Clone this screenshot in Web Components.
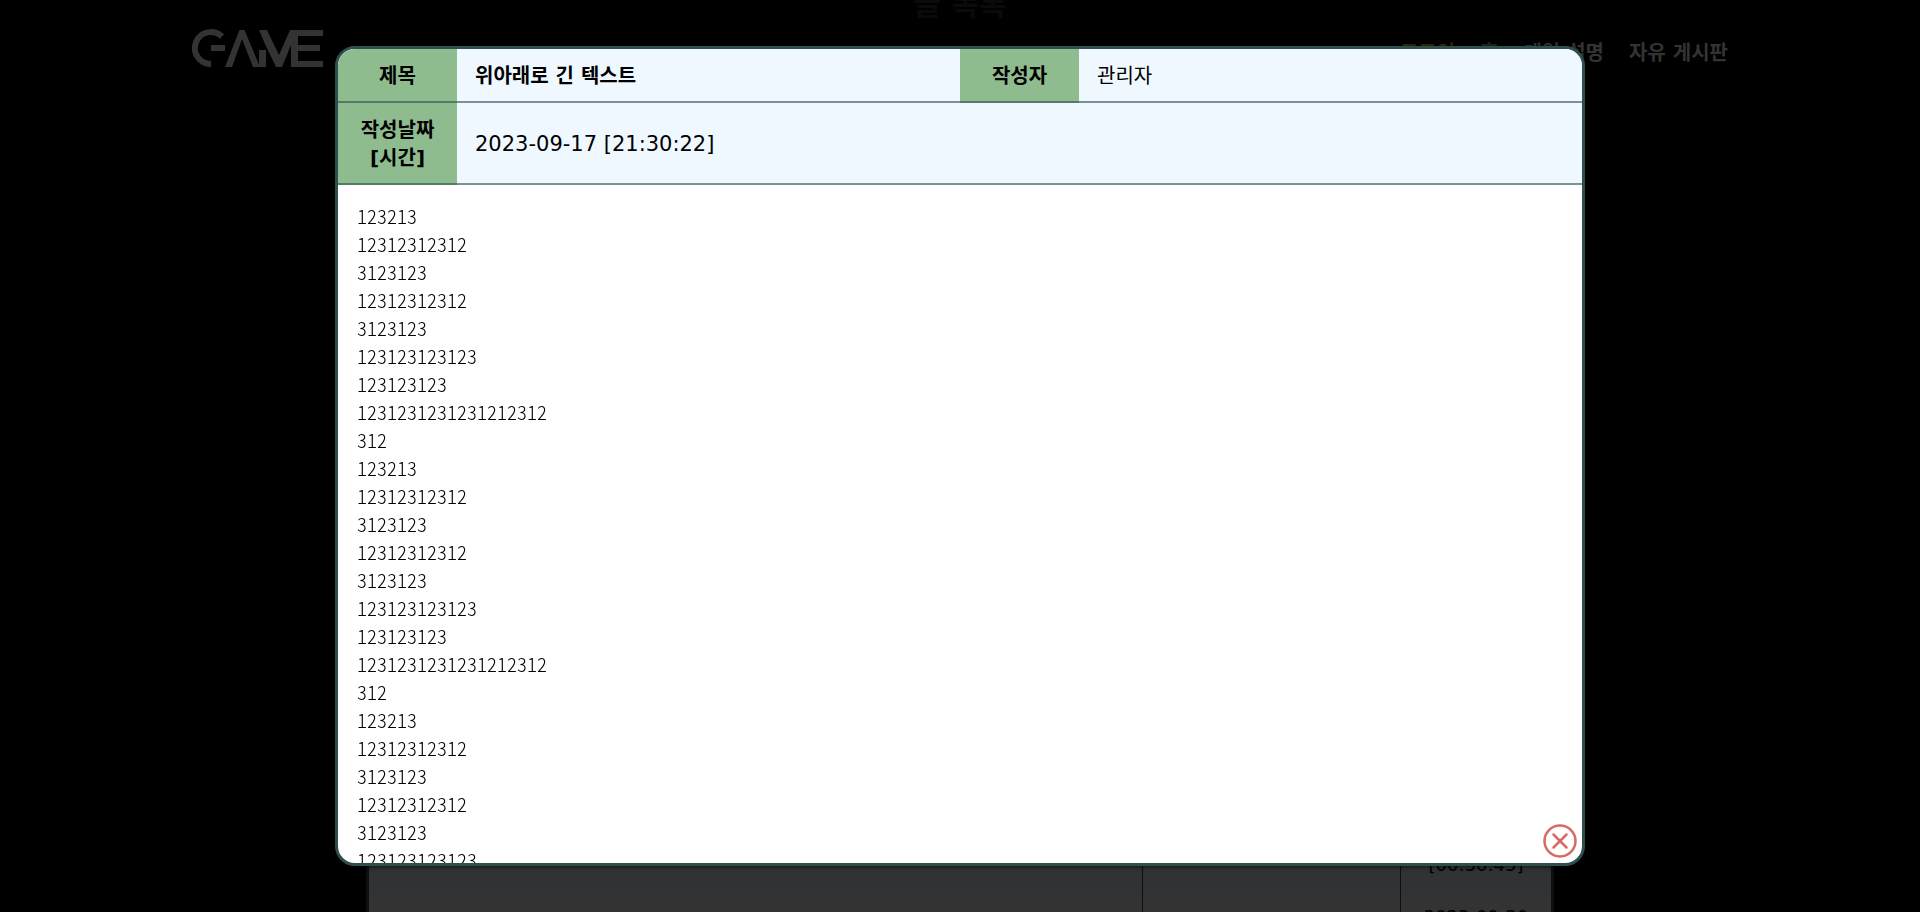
<!DOCTYPE html>
<html lang="ko">
<head>
<meta charset="utf-8">
<title>자유 게시판</title>
<style>
  html, body { margin: 0; height: 100%; background: #000; }
  body {
    overflow: hidden;
    font-family: "DejaVu Sans", "Noto Sans CJK KR", sans-serif;
    font-size: 20px;
    line-height: 28px;
    color: #000;
  }
</style>
</head>
<body>
<board-page></board-page>

<script>
const define = (name, html) => {
  const template = document.createElement('template');
  template.innerHTML = html;
  customElements.define(name, class extends HTMLElement {
    constructor() {
      super();
      this.attachShadow({ mode: 'open' }).append(template.content.cloneNode(true));
    }
  });
};

define('game-logo', `
  <style>
    :host { display: block; width: 132px; height: 38px; }
    svg { display: block; width: 100%; height: 100%; overflow: visible; }
  </style>
  <svg viewBox="1 0 132 38" role="img" aria-label="GAME">
    <path d="M31 7.500A16 16 0 1 0 20 35" fill="none" stroke="#333" stroke-width="6"/>
    <path d="M20 16h14v6H20z" fill="#333"/>
    <path d="M34 38 48.500 1h5L69 38h-7L51 10 41 38z" fill="#333"/>
    <path d="M68 1h8l12 25L99 1h8v37h-7V16L91 38h-6L74 15z" fill="#333"/>
    <path d="M68 21h7v17h-7z" fill="#333"/>
    <path d="M106 1h26v6h-26zM106 16h23v6h-23zM106 32h26v6h-26z" fill="#333"/>
  </svg>`);

define('site-nav', `
  <style>
    :host { display: block; }
    nav { display: flex; gap: 25px; font-weight: 700; }
    a { color: #333; text-decoration: none; white-space: nowrap; }
    .login { color: #3a2600; }
    .home { color: #1c2620; }
  </style>
  <nav>
    <a class="login" href="#login">로그인</a>
    <a class="home" href="#home">홈</a>
    <a href="#guide">게임 설명</a>
    <a href="#board">자유 게시판</a>
  </nav>`);

define('site-header', `
  <style>
    :host {
      position: absolute; inset: 0 0 auto; box-sizing: border-box;
      display: flex; justify-content: space-between; align-items: center;
      height: 96px; padding: 0 10%;
    }
    site-nav { padding-top: 10px; }
  </style>
  <game-logo></game-logo>
  <site-nav></site-nav>`);

define('post-list', `
  <style>
    :host { display: block; width: 1188px; max-width: 90%; margin: 0 auto; }
    h1 { margin: -16px 0 782px; font-size: 30px; line-height: 42px; color: #0a0a0a; text-align: center; }
    table {
      width: 100%; table-layout: fixed; border-collapse: separate; border-spacing: 0;
      border: 3px solid #091010; box-sizing: border-box; font-size: 18px;
    }
    td { padding: 12px 0; height: 56px; text-align: center; background: #333; }
    td + td { border-left: 1px solid #091010; }
    tr:first-child td { background: #303233; }
    .author { width: 258px; }
    .date { width: 151px; }
  </style>
  <h1>글 목록</h1>
  <table>
    <colgroup><col><col class="author"><col class="date"></colgroup>
    <tbody>
      <tr><td></td><td></td><td>2023-09-20<br>[00:30:45]</td></tr>
      <tr><td></td><td></td><td>2023-09-20<br>&nbsp;</td></tr>
    </tbody>
  </table>`);

define('close-button', `
  <style>
    :host { display: block; }
    button { display: block; width: 34px; height: 34px; padding: 0; border: 0; background: none; cursor: pointer; }
    svg { display: block; }
  </style>
  <button type="button" aria-label="닫기">
    <svg width="34" height="34" viewBox="0 0 34 34" fill="none" stroke="#d66b63" stroke-width="2.500" stroke-linecap="round">
      <circle cx="17" cy="17" r="15.500"/>
      <path d="M10.500 10.500l13 13M23.500 10.500l-13 13"/>
    </svg>
  </button>`);

define('post-meta', `
  <style>
    :host { display: block; flex: none; }
    table { width: 100%; table-layout: fixed; border-spacing: 0; background: #f0f8ff; }
    th, td { padding: 13px 0 11px; border-bottom: 2px solid rgba(47, 79, 79, .6); }
    th { background: #8fbc8f; text-align: center; }
    td { padding-left: 18px; text-align: left; }
    .label { width: 119px; }
    .title { font-weight: 700; }
    .date { font-size: 21px; }
  </style>
  <table>
    <colgroup><col class="label"><col><col class="label"><col></colgroup>
    <tbody>
      <tr>
        <th scope="row">제목</th><td class="title"><slot name="title"></slot></td>
        <th scope="row">작성자</th><td><slot name="author"></slot></td>
      </tr>
      <tr>
        <th scope="row">작성날짜<br>[시간]</th><td class="date" colspan="3"><slot name="date"></slot></td>
      </tr>
    </tbody>
  </table>`);

define('post-body', `
  <style>
    :host {
      display: block; flex: 1; min-height: 0; overflow: auto; scrollbar-width: none;
      padding: 17px 19px;
      font-family: "Noto Sans CJK KR", sans-serif; font-weight: 300;
      font-feature-settings: "hwid";
    }
    slot { display: block; white-space: pre-line; }
  </style>
  <slot></slot>`);

define('post-dialog', `
  <style>
    :host { position: fixed; inset: 0; display: grid; place-items: center; }
    section {
      position: relative; box-sizing: border-box;
      display: flex; flex-direction: column;
      width: 1250px; max-width: 90%; height: 90vh;
      overflow: hidden; background: #fff;
      border: 3px solid #2f4f4f; border-radius: 20px;
      box-shadow: 0 1px 4px rgba(0, 0, 0, .6);
    }
    close-button { position: absolute; right: 5px; bottom: 5px; }
  </style>
  <section role="dialog" aria-modal="true">
    <slot></slot>
    <close-button></close-button>
  </section>`);

define('board-page', `
  <style>
    :host { display: flow-root; position: relative; height: 100vh; overflow: hidden; }
  </style>
  <post-list></post-list>
  <site-header></site-header>
  <post-dialog>
    <post-meta>
      <span slot="title">위아래로 긴 텍스트</span>
      <span slot="author">관리자</span>
      <span slot="date">2023-09-17 [21:30:22]</span>
    </post-meta>
    <post-body>123213
12312312312
3123123
12312312312
3123123
123123123123
123123123
1231231231231212312
312
123213
12312312312
3123123
12312312312
3123123
123123123123
123123123
1231231231231212312
312
123213
12312312312
3123123
12312312312
3123123
123123123123</post-body>
  </post-dialog>`);
</script>
</body>
</html>
